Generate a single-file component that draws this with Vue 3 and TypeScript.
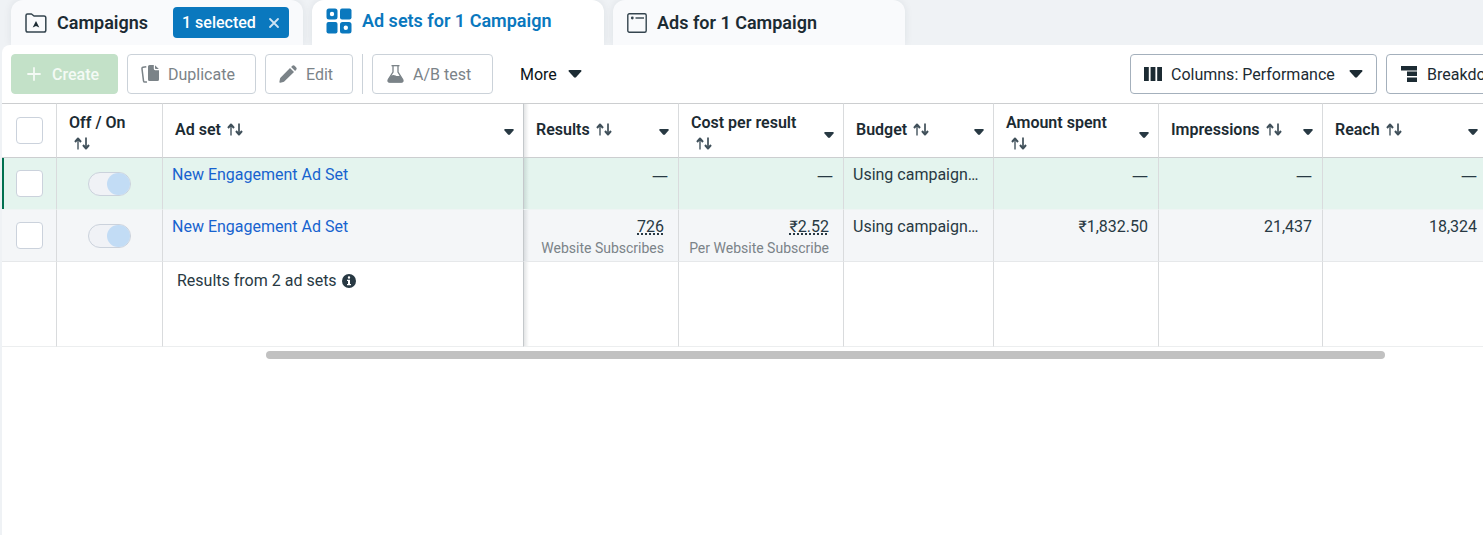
<script setup lang="ts">
import { ref } from 'vue'

interface Column {
  key: string
  label: string
  stacked?: boolean
  menu?: boolean
}

interface Cell {
  value: string
  note?: string
}

interface AdSet {
  id: number
  name: string
  highlighted: boolean
  selected: boolean
  on: boolean
  cells: Record<string, Cell>
}

const columns: Column[] = [
  { key: 'toggle', label: 'Off / On', stacked: true },
  { key: 'name', label: 'Ad set', menu: true },
  { key: 'results', label: 'Results', menu: true },
  { key: 'cost', label: 'Cost per result', stacked: true, menu: true },
  { key: 'budget', label: 'Budget', menu: true },
  { key: 'spent', label: 'Amount spent', stacked: true, menu: true },
  { key: 'impressions', label: 'Impressions', menu: true },
  { key: 'reach', label: 'Reach', menu: true },
]
const metrics = columns.slice(2)

const allSelected = ref(false)
const adSets = ref<AdSet[]>([
  {
    id: 1,
    name: 'New Engagement Ad Set',
    highlighted: true,
    selected: false,
    on: true,
    cells: {
      results: { value: '—' },
      cost: { value: '—' },
      budget: { value: 'Using campaign…' },
      spent: { value: '—' },
      impressions: { value: '—' },
      reach: { value: '—' },
    },
  },
  {
    id: 2,
    name: 'New Engagement Ad Set',
    highlighted: false,
    selected: false,
    on: true,
    cells: {
      results: { value: '726', note: 'Website Subscribes' },
      cost: { value: '₹2.52', note: 'Per Website Subscribe' },
      budget: { value: 'Using campaign…' },
      spent: { value: '₹1,832.50' },
      impressions: { value: '21,437' },
      reach: { value: '18,324' },
    },
  },
])
</script>

<template>
  <div class="manager">
    <nav class="tabs" aria-label="Levels">
      <div class="tab">
        <a href="#campaigns" class="tab-link">
          <svg width="22" height="20" viewBox="0 0 22 20" fill="none" stroke="#34444e" stroke-width="1.5" stroke-linejoin="round" aria-hidden="true">
            <path d="M1 2.500Q1 1 2.500 1H6.500L9 3H19Q20.800 3 20.800 4.800V17.200Q20.800 19 19 19H2.800Q1 19 1 17.200Z" />
            <path d="M11 8L14.300 14.500L11 12.900L7.700 14.500Z" fill="#1c2b33" stroke="none" />
          </svg>
          <span>Campaigns</span>
        </a>
        <button type="button" class="badge" aria-label="1 selected, clear">
          <span>1 selected</span>
          <svg width="12" height="12" viewBox="0 0 12 12" stroke="#cfe4f3" stroke-width="1.800" stroke-linecap="round" aria-hidden="true">
            <path d="M2 2L10 10M10 2L2 10" />
          </svg>
        </button>
      </div>
      <div class="tab active">
        <a href="#adsets" class="tab-link" aria-current="page">
          <svg width="26" height="26" viewBox="0 0 26 26" fill="#0a78be" aria-hidden="true">
            <path fill-rule="evenodd" d="M3 .5H9Q11.500 .5 11.500 3V9Q11.500 11.500 9 11.500H3Q.5 11.500 .5 9V3Q.5 .5 3 .5ZM6 3.800A2.200 2.200 0 1 0 6 8.200A2.200 2.200 0 1 0 6 3.800Z" />
            <rect x="14" y=".5" width="11.500" height="11" rx="2" />
            <rect x=".5" y="14" width="11" height="11.500" rx="2" />
            <path fill-rule="evenodd" d="M16.500 14H23Q25.500 14 25.500 16.500V23Q25.500 25.500 23 25.500H16.500Q14 25.500 14 23V16.500Q14 14 16.500 14ZM19.800 17.600A2.200 2.200 0 1 0 19.800 22A2.200 2.200 0 1 0 19.800 17.600Z" />
          </svg>
          <span>Ad sets for 1 Campaign</span>
        </a>
      </div>
      <div class="tab">
        <a href="#ads" class="tab-link">
          <svg width="20" height="20" viewBox="0 0 20 20" fill="none" stroke="#34444e" stroke-width="1.400" aria-hidden="true">
            <rect x=".8" y=".8" width="18.400" height="18.400" rx="1.500" />
            <path d="M8.500 5H17" />
            <circle cx="5.300" cy="5" r="1.400" fill="#34444e" stroke="none" />
          </svg>
          <span>Ads for 1 Campaign</span>
        </a>
      </div>
    </nav>

    <main class="panel">
      <div class="toolbar">
        <div class="group">
          <button type="button" class="btn create">
            <svg width="14" height="14" viewBox="0 0 14 14" stroke="currentColor" stroke-width="1.800" stroke-linecap="round" aria-hidden="true"><path d="M7 1V13M1 7H13" /></svg>
            <span>Create</span>
          </button>
          <button type="button" class="btn muted duplicate">
            <svg width="18" height="18" viewBox="0 0 18 18" fill="currentColor" aria-hidden="true">
              <path d="M8.500 0H12.800V3.800Q12.800 5.200 14.200 5.200H18V14.500Q18 16 16.500 16H8.500Q7 16 7 14.500V1.500Q7 0 8.500 0Z" />
              <path d="M14 .2L17.800 4H14.800Q14 4 14 3.200Z" />
              <path d="M5.300 1.800L2 2.300Q.8 2.500 1 3.800L2.500 15.800Q2.700 17.200 4 17.100L6 16.900" fill="none" stroke="currentColor" stroke-width="1.500" />
            </svg>
            <span>Duplicate</span>
          </button>
          <button type="button" class="btn muted edit">
            <svg width="18" height="18" viewBox="0 0 18 18" fill="currentColor" aria-hidden="true">
              <path d="M11 3L15 7L5.500 16.300Q5 16.800 4.300 17L1.300 17.700Q.2 17.900 .4 16.700L1 13.800Q1.200 13 1.700 12.500Z" />
              <path d="M12.100 1.900L13.300 .8Q14.500-.2 15.600 .8L17.200 2.400Q18.200 3.500 17.200 4.700L16.100 5.900Z" />
            </svg>
            <span>Edit</span>
          </button>
          <span class="divider" />
          <button type="button" class="btn muted test">
            <svg width="17" height="18" viewBox="0 0 17 18" fill="currentColor" aria-hidden="true">
              <path d="M6 1V7L1.300 14.500Q.3 17.200 2.800 17.200H14.200Q16.700 17.200 15.700 14.500L11 7V1" fill="none" stroke="currentColor" stroke-width="1.300" />
              <path d="M4.500 0H12.500V1.300H4.500Z" />
              <path d="M4 10.500Q6.500 9.500 8.500 10.500T13 10.500L16 15Q16.800 17.500 14.200 17.500H2.800Q.2 17.500 1 15Z" />
            </svg>
            <span>A/B test</span>
          </button>
          <button type="button" class="btn more">
            <span>More</span>
            <svg width="14" height="8" viewBox="0 0 14 8" fill="#1c2b33" aria-hidden="true"><path d="M1.500 0H12.500Q14 .3 13.200 1.500L8 7.300Q7 8.200 6 7.300L.8 1.500Q0 .3 1.500 0Z" /></svg>
          </button>
        </div>
        <div class="group end">
          <button type="button" class="btn columns">
            <svg width="18" height="14" viewBox="0 0 18 14" fill="#1c2b33" aria-hidden="true"><path d="M0 0H4.800V14H0ZM6.600 0H11.400V14H6.600ZM13.200 0H18V14H13.200Z" /></svg>
            <span>Columns: Performance</span>
            <svg width="14" height="8" viewBox="0 0 14 8" fill="#1c2b33" aria-hidden="true"><path d="M1.500 0H12.500Q14 .3 13.200 1.500L8 7.300Q7 8.200 6 7.300L.8 1.500Q0 .3 1.500 0Z" /></svg>
          </button>
          <button type="button" class="btn breakdown">
            <svg width="16" height="16" viewBox="0 0 16 16" fill="#1c2b33" aria-hidden="true"><path d="M0 0H16V4.500H0ZM6 5.500H16V10H6ZM6 11.500H16V16H6Z" /></svg>
            <span>Breakdown</span>
          </button>
        </div>
      </div>

      <div class="table-wrap">
        <table>
          <colgroup>
            <col class="w-check" />
            <col v-for="c in columns" :key="c.key" :class="'w-' + c.key" />
          </colgroup>
          <thead>
            <tr>
              <th scope="col" class="check">
                <input v-model="allSelected" type="checkbox" aria-label="Select all ad sets" />
              </th>
              <th v-for="c in columns" :key="c.key" scope="col" :class="c.key">
                <div class="head">
                  <button type="button" class="sort" :class="{ stacked: c.stacked }">
                    <span>{{ c.label }}</span>
                    <svg width="16" height="13" viewBox="0 0 16 13" aria-hidden="true">
                      <path d="M4 12.500V3" stroke="#7b868d" stroke-width="2" />
                      <path d="M1 5L4 1.500L7 5" fill="none" stroke="#40505a" stroke-width="2" stroke-linejoin="round" />
                      <path d="M12 .5V10" stroke="#5c6971" stroke-width="2" />
                      <path d="M9 8L12 11.500L15 8" fill="none" stroke="#40505a" stroke-width="2" stroke-linejoin="round" />
                    </svg>
                  </button>
                  <button v-if="c.menu" type="button" class="menu" :aria-label="c.label + ' options'">
                    <svg width="10" height="6" viewBox="0 0 10 6" fill="#283943" aria-hidden="true"><path d="M1 0H9Q10.200 .3 9.500 1.500L6 5.500Q5 6.400 4 5.500L.5 1.500Q-.2 .3 1 0Z" /></svg>
                  </button>
                </div>
              </th>
            </tr>
          </thead>
          <tbody>
            <tr v-for="row in adSets" :key="row.id" :class="{ highlighted: row.highlighted }">
              <td class="check">
                <input v-model="row.selected" type="checkbox" :aria-label="'Select ' + row.name" />
              </td>
              <td class="toggle">
                <input v-model="row.on" type="checkbox" role="switch" class="switch" :aria-label="'Turn on ' + row.name" />
              </td>
              <td class="name"><a href="#adset">{{ row.name }}</a></td>
              <td
                v-for="c in metrics"
                :key="c.key"
                :class="[c.key, { noted: row.cells[c.key].note, empty: row.cells[c.key].value === '—' }]"
              >
                <span class="value">{{ row.cells[c.key].value }}</span>
                <small v-if="row.cells[c.key].note">{{ row.cells[c.key].note }}</small>
              </td>
            </tr>
          </tbody>
          <tfoot>
            <tr>
              <td />
              <td />
              <td class="name">
                <span class="summary">
                  Results from 2 ad sets
                  <svg width="14" height="14" viewBox="0 0 14 14" aria-hidden="true">
                    <circle cx="7" cy="7" r="7" fill="#283943" />
                    <path d="M7 2.300A1.200 1.200 0 1 1 7 4.700A1.200 1.200 0 1 1 7 2.300ZM5 5.700H8V10H9V11.300H5V10H6V7H5Z" fill="#fff" />
                  </svg>
                </span>
              </td>
              <td v-for="c in metrics" :key="c.key" :class="c.key" />
            </tr>
          </tfoot>
        </table>
      </div>
      <div class="scroll-track"><div class="scroll-thumb" /></div>
    </main>
  </div>
</template>

<style>
body {
  margin: 0;
  background: #eff2f5;
}
</style>

<style scoped>
.manager {
  display: flex;
  flex-direction: column;
  min-height: 100vh;
  overflow: hidden;
  font-family: Roboto, "Noto Sans", sans-serif;
  font-size: 16px;
  line-height: 22px;
  color: #1c2b33;
}
button {
  font: inherit;
  color: inherit;
  margin: 0;
  padding: 0;
  border: 0;
  background: none;
}
a {
  text-decoration: none;
}
svg {
  flex: none;
}

.tabs {
  display: flex;
  gap: 9px;
  padding-left: 11px;
}
.tab {
  box-sizing: border-box;
  display: flex;
  align-items: center;
  justify-content: space-between;
  width: 292px;
  height: 45px;
  padding: 0 14px;
  border-radius: 12px 12px 0 0;
  background: #f9fafc;
  box-shadow: 0 0 8px rgba(28, 43, 51, 0.08);
}
.tab.active {
  padding-bottom: 4px;
  background: #fff;
  color: #0a78be;
}
.tab-link {
  display: flex;
  align-items: center;
  gap: 10px;
  font-size: 18px;
  font-weight: 600;
  color: inherit;
}
.badge {
  display: flex;
  align-items: center;
  justify-content: space-between;
  width: 116px;
  height: 31px;
  padding: 0 9px;
  border-radius: 4px;
  background: #0a78be;
  color: #fff;
  font-weight: 500;
}

.panel {
  position: relative;
  flex: 1;
  margin-left: 2px;
  border-radius: 8px 0 0 0;
  background: #fff;
}
.toolbar {
  display: flex;
  justify-content: space-between;
  padding: 9px 0 9px 9px;
  overflow: hidden;
}
.group {
  display: flex;
  flex: none;
  gap: 9px;
}
.group.end {
  width: 353px;
}
.btn {
  box-sizing: border-box;
  display: flex;
  flex: none;
  align-items: center;
  gap: 9px;
  height: 40px;
  padding: 0 13px;
  border: 1px solid #a4b0bc;
  border-radius: 4px;
}
.btn span {
  padding-top: 2px;
}
.muted {
  border-color: #cbd2d9;
  color: #7b8388;
}
.create {
  width: 107px;
  gap: 11px;
  padding: 0 15px;
  border-color: #c3e1c8;
  background: #c3e1c8;
  color: #f4faf5;
  font-weight: 500;
}
.duplicate {
  width: 129px;
}
.edit {
  width: 88px;
}
.test {
  width: 121px;
  padding: 0 14px;
}
.divider {
  width: 1px;
  background: #cbd2d9;
}
.more {
  gap: 11px;
  padding: 0 17px;
  border-color: transparent;
  color: #0b1419;
}
.columns {
  width: 247px;
}
.columns svg:last-child {
  margin-left: auto;
}
.breakdown {
  gap: 10px;
  padding: 0 14px;
}

.table-wrap {
  overflow: hidden;
}
table {
  width: calc(100% + 5px);
  table-layout: fixed;
  border-collapse: separate;
  border-spacing: 0;
}
.w-check {
  width: 55px;
}
.w-toggle {
  width: 106px;
}
.w-results {
  width: 155px;
}
.w-cost,
.w-spent,
.w-reach {
  width: 165px;
}
.w-impressions {
  width: 164px;
}
.w-budget {
  width: 150px;
}
th,
td {
  box-sizing: border-box;
  padding: 0;
  border-right: 1px solid #d9dbdd;
  text-align: left;
}
th {
  height: 55px;
  border-top: 1px solid #ccced0;
  border-bottom: 1px solid #ccced0;
  font-weight: 600;
}
.head {
  display: flex;
  align-items: center;
  justify-content: space-between;
  padding: 0 9px 0 12px;
}
.sort {
  display: flex;
  align-items: center;
  gap: 6px;
  padding-bottom: 2px;
  line-height: 21px;
}
.sort.stacked {
  flex-direction: column;
  align-items: flex-start;
  gap: 4px;
  padding-bottom: 0;
}
.stacked svg {
  margin-left: 5px;
}
.menu {
  display: flex;
  padding-top: 3px;
}
.stacked + .menu {
  padding-top: 8px;
}
.check {
  text-align: center;
  vertical-align: middle;
}
.check input {
  appearance: none;
  display: block;
  box-sizing: border-box;
  width: 27px;
  height: 27px;
  margin: 0 auto;
  border: 1px solid #cbd2dc;
  border-radius: 4px;
  background: #fff;
}
.check input:checked {
  background: #0a78be;
}

tbody td {
  height: 52px;
  padding: 6px 10px 0 9px;
  border-bottom: 1px solid #e6e8ea;
  background-color: #f4f6f8;
  vertical-align: top;
  text-align: right;
  color: #283943;
}
tbody .highlighted td {
  border-bottom-color: #eef4f3;
  background-color: #e4f4ee;
}
tbody td.check,
tbody td.toggle {
  padding: 0;
  vertical-align: middle;
}
.highlighted td.check {
  box-shadow: inset 2px 0 #00704f;
}
.switch {
  appearance: none;
  display: flex;
  justify-content: flex-start;
  box-sizing: border-box;
  width: 43px;
  height: 24px;
  margin: 0 auto;
  border: 1px solid #cbd2dc;
  border-radius: 12px;
  background: #f0f2f6;
}
.switch::before {
  content: "";
  width: 23px;
  height: 22px;
  border-radius: 12px;
  background: #c2dcf5;
}
.switch:checked {
  justify-content: flex-end;
}
tbody td.name,
tbody td.budget {
  text-align: left;
}
.name a {
  color: #1763cf;
}
td.budget {
  white-space: nowrap;
}
.empty .value {
  font-family: "Noto Sans", sans-serif;
}
tbody td.noted {
  padding-right: 14px;
  padding-left: 0;
}
.noted .value {
  display: inline-block;
  text-decoration: underline dotted 2px;
  text-underline-offset: 1px;
}
small {
  display: block;
  font-size: 14px;
  line-height: 20px;
  white-space: nowrap;
  color: #7b8388;
}
th.results,
td.results {
  background-image: linear-gradient(to right, rgba(28, 43, 51, 0.12), rgba(28, 43, 51, 0) 5px);
}
th.name,
td.name {
  border-right-color: #c4c8cb;
}
tfoot td {
  height: 85px;
  border-bottom: 1px solid #eceeef;
  vertical-align: top;
}
tfoot td.name {
  padding: 8px 14px 0;
}
.summary {
  display: flex;
  align-items: center;
  gap: 5px;
  color: #283943;
}
.scroll-track {
  padding: 4px 98px 0 264px;
}
.scroll-thumb {
  height: 8px;
  border-radius: 4px;
  background: #c1c1c1;
}
</style>
